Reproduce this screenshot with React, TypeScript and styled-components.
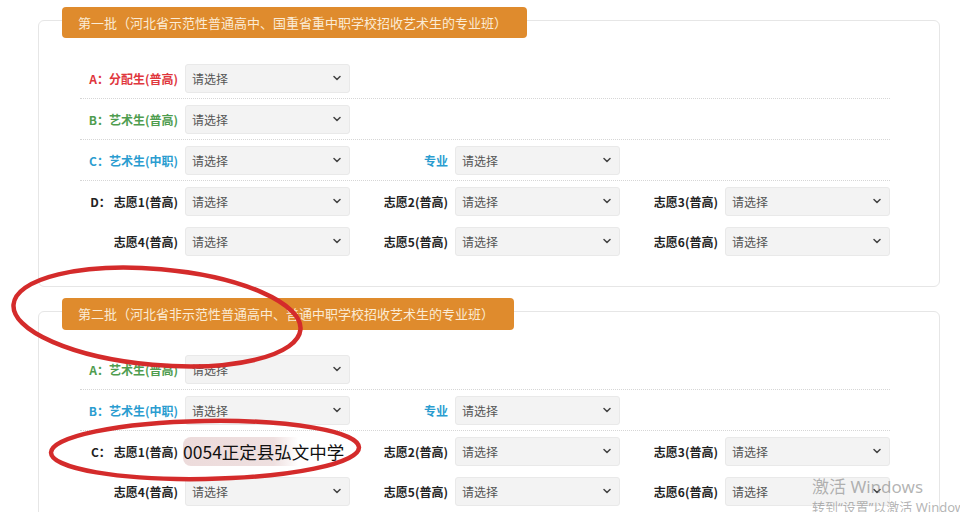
import React from "react";
import styled, { createGlobalStyle } from "styled-components";

const Global = createGlobalStyle`
  html, body { margin: 0; padding: 0; background: #ffffff; }
  body {
    font-family: "Microsoft YaHei", "Noto Sans CJK SC", "Noto Sans", sans-serif;
    width: 960px; height: 512px; overflow: hidden;
  }
  * { box-sizing: border-box; }
`;

const Page = styled.div`
  position: relative;
  padding: 20px 0 0 38px;
  width: 960px;
  height: 512px;
  overflow: hidden;
`;

const Panel = styled.section<{ $gap: number }>`
  width: 902px;
  border: 1px solid #e6e6e6;
  border-radius: 6px;
  padding: 0 0 25px 0;
  margin-bottom: 24px;
  display: flex;
  flex-direction: column;
  align-items: flex-start;
  & > div:nth-child(2) { margin-top: ${(p) => p.$gap}px; }
`;

const Header = styled.div<{ $h: number }>`
  margin: -14px 0 0 23px;
  height: ${(p) => p.$h}px;
  line-height: ${(p) => p.$h}px;
  padding: 0 20px 0 16px;
  background: #df8b2d;
  color: #fbecd6;
  border-radius: 4px;
  font-size: 13px;
  white-space: nowrap;
`;

const Rows = styled.div`
  margin-left: 41px;
  width: 810px;
  display: flex;
  flex-direction: column;
`;

const Row = styled.div<{ $sep?: boolean }>`
  display: flex;
  align-items: center;
  height: ${(p) => (p.$sep ? 41 : 40)}px;
  border-bottom: ${(p) => (p.$sep ? "1px dotted #d6d6d6" : "none")};
`;

const Field = styled.div`
  display: flex;
  align-items: center;
  width: 270px;
`;

const Label = styled.div<{ $color: string }>`
  width: 105px;
  padding-right: 7px;
  display: flex;
  justify-content: flex-end;
  align-items: center;
  font-size: 12px;
  font-weight: 700;
  color: ${(p) => p.$color};
  white-space: nowrap;
`;

const Prefix = styled.span`
  margin-right: 3px;
`;

const Select = styled.div`
  width: 165px;
  height: 29px;
  background: #f3f3f3;
  border: 1px solid #e9e9e9;
  border-radius: 3px;
  padding: 0 8px 0 6px;
  display: flex;
  align-items: center;
  justify-content: space-between;
  font-size: 12px;
  color: #555;
`;

const Filled = styled.div`
  width: 165px;
  height: 29px;
  margin-left: -2px;
  display: flex;
  align-items: center;
  font-size: 17.5px;
  color: #111;
  white-space: nowrap;
  border-radius: 8px;
  background: linear-gradient(90deg, rgba(214, 176, 176, 0.45) 0%, rgba(214, 176, 176, 0.4) 55%, rgba(214, 176, 176, 0) 70%);
`;

const Overlay = styled.svg`
  position: absolute;
  left: 0;
  top: 0;
  width: 960px;
  height: 512px;
  pointer-events: none;
`;

const Watermark = styled.div`
  position: absolute;
  left: 812px;
  top: 476px;
  color: rgba(130, 130, 130, 0.6);
  font-family: "Noto Sans", "Noto Sans CJK SC", sans-serif;
  white-space: nowrap;
  pointer-events: none;
`;

const WmTitle = styled.div`
  font-size: 17px;
  line-height: 22px;
`;

const WmSub = styled.div`
  font-size: 13px;
  line-height: 18px;
`;

const Chevron = () => (
  <svg width="8" height="6" viewBox="0 0 8 6">
    <path d="M1 1.5 L4 4.5 L7 1.5" fill="none" stroke="#444" strokeWidth="1.5" strokeLinecap="round" strokeLinejoin="round" />
  </svg>
);

const Choose = () => (
  <Select>
    <span>请选择</span>
    <Chevron />
  </Select>
);

type F = { label: string; color?: string; prefix?: string; filled?: string };

const FieldItem = ({ label, color = "#222", prefix, filled }: F) => (
  <Field>
    <Label $color={color}>
      {prefix && <Prefix>{prefix}</Prefix>}
      <span>{label}</span>
    </Label>
    {filled ? <Filled>{filled}</Filled> : <Choose />}
  </Field>
);

const RED = "#e0373d";
const GREEN = "#4f9d4f";
const TEAL = "#2b9dd0";

export default function App() {
  return (
    <>
      <Global />
      <Page>
        <Panel $gap={20}>
          <Header $h={31}>第一批（河北省示范性普通高中、国重省重中职学校招收艺术生的专业班）</Header>
          <Rows>
            <Row $sep>
              <FieldItem label="A：分配生(普高)" color={RED} />
            </Row>
            <Row $sep>
              <FieldItem label="B：艺术生(普高)" color={GREEN} />
            </Row>
            <Row $sep>
              <FieldItem label="C：艺术生(中职)" color={TEAL} />
              <FieldItem label="专业" color={TEAL} />
            </Row>
            <Row>
              <FieldItem prefix="D：" label="志愿1(普高)" />
              <FieldItem label="志愿2(普高)" />
              <FieldItem label="志愿3(普高)" />
            </Row>
            <Row>
              <FieldItem label="志愿4(普高)" />
              <FieldItem label="志愿5(普高)" />
              <FieldItem label="志愿6(普高)" />
            </Row>
          </Rows>
        </Panel>
        <Panel $gap={19}>
          <Header $h={32}>第二批（河北省非示范性普通高中、普通中职学校招收艺术生的专业班）</Header>
          <Rows>
            <Row $sep>
              <FieldItem label="A：艺术生(普高)" color={GREEN} />
            </Row>
            <Row $sep>
              <FieldItem label="B：艺术生(中职)" color={TEAL} />
              <FieldItem label="专业" color={TEAL} />
            </Row>
            <Row>
              <FieldItem prefix="C：" label="志愿1(普高)" filled="0054正定县弘文中学" />
              <FieldItem label="志愿2(普高)" />
              <FieldItem label="志愿3(普高)" />
            </Row>
            <Row>
              <FieldItem label="志愿4(普高)" />
              <FieldItem label="志愿5(普高)" />
              <FieldItem label="志愿6(普高)" />
            </Row>
          </Rows>
        </Panel>
        <Overlay viewBox="0 0 960 512">
          <ellipse cx="157" cy="317" rx="144" ry="48" transform="rotate(5 157 317)" fill="none" stroke="#d42b2b" strokeWidth="4.5" />
          <ellipse cx="205" cy="450" rx="154" ry="29" transform="rotate(-1 205 450)" fill="none" stroke="#d42b2b" strokeWidth="4.5" />
        </Overlay>
        <Watermark>
          <WmTitle>激活 Windows</WmTitle>
          <WmSub>转到“设置”以激活 Windows</WmSub>
        </Watermark>
      </Page>
    </>
  );
}
